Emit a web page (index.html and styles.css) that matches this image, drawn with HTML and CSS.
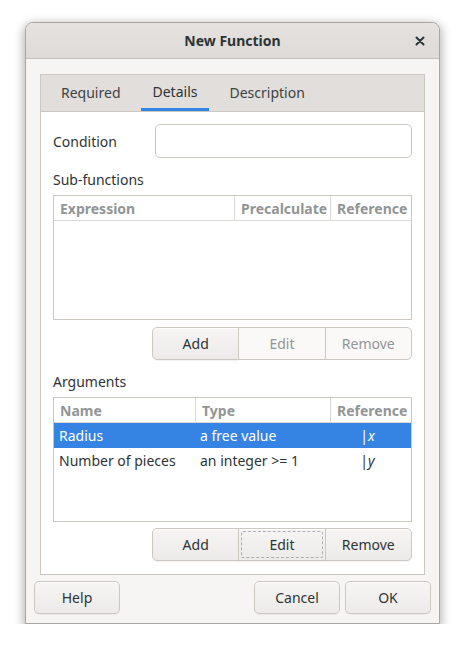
FILE: index.html
```html
<!DOCTYPE html>
<html>
<head>
<meta charset="utf-8">
<link rel="stylesheet" href="styles.css">
</head>
<body>
<div class="window">
  <div class="titlebar">
    <span class="title">New Function</span>
    <span class="close"><svg width="10" height="10" viewBox="0 0 10 10"><path d="M1.5 1.5 L8.5 8.5 M8.5 1.5 L1.5 8.5" stroke="#2e3436" stroke-width="2" stroke-linecap="round"/></svg></span>
  </div>
  <div class="content">
    <div class="notebook">
      <div class="tabs">
        <div class="tab">Required</div>
        <div class="tab active">Details</div>
        <div class="tab">Description</div>
      </div>
      <div class="page">
        <div class="row-cond">
          <span class="label">Condition</span>
          <div class="entry"></div>
        </div>
        <div class="section-label">Sub-functions</div>
        <div class="tree">
          <div class="thead cols1">
            <div class="th">Expression</div>
            <div class="th">Precalculate</div>
            <div class="th">Reference</div>
          </div>
        </div>
        <div class="btnrow">
          <div class="linked">
            <div class="btn">Add</div>
            <div class="btn disabled">Edit</div>
            <div class="btn disabled">Remove</div>
          </div>
        </div>
        <div class="section-label">Arguments</div>
        <div class="tree">
          <div class="thead cols2">
            <div class="th">Name</div>
            <div class="th">Type</div>
            <div class="th">Reference</div>
          </div>
          <div class="tr cols2 selected">
            <div class="td">Radius</div>
            <div class="td">a free value</div>
            <div class="td ref">|<i>x</i></div>
          </div>
          <div class="tr cols2">
            <div class="td">Number of pieces</div>
            <div class="td">an integer &gt;= 1</div>
            <div class="td ref">|<i>y</i></div>
          </div>
        </div>
        <div class="btnrow last">
          <div class="linked">
            <div class="btn">Add</div>
            <div class="btn focus"><span>Edit</span></div>
            <div class="btn">Remove</div>
          </div>
        </div>
      </div>
    </div>
    <div class="actions">
      <div class="btn single">Help</div>
      <div class="spacer"></div>
      <div class="btn single">Cancel</div>
      <div class="btn single">OK</div>
    </div>
  </div>
</div>
</body>
</html>
```
FILE: styles.css
```css
* { box-sizing: border-box; }
html, body { margin: 0; padding: 0; background: #ffffff; }
body {
  font-family: "Noto Sans", "DejaVu Sans", sans-serif;
  font-size: 14px;
  color: #2e3436;
}
.window {
  margin: 22px 0 0 25px;
  width: 415px;
  height: 602px;
  background: #f6f5f4;
  border: 1px solid #a8a6a3;
  border-radius: 8px 8px 0 0;
  box-shadow: 0 3px 10px 2px rgba(0,0,0,0.28);
  display: flex;
  flex-direction: column;
}
.titlebar {
  height: 36px;
  flex: none;
  background: linear-gradient(#e5e2df, #dddad7);
  border-bottom: 1px solid #c4c0bc;
  border-radius: 7px 7px 0 0;
  display: flex;
  align-items: center;
  justify-content: center;
  position: relative;
}
.title { font-weight: bold; font-size: 14px; color: #2e3436; }
.close { position: absolute; right: 14px; top: 13px; line-height: 0; }
.content {
  flex: 1;
  display: flex;
  flex-direction: column;
  padding: 15px 8px 8px 8px;
}
.notebook {
  margin: 0 6px 0 6px;
  border: 1px solid #cdc7c2;
  height: 501px;
  display: flex;
  flex-direction: column;
}
.tabs {
  height: 37px;
  background: #e1dedb;
  border-bottom: 1px solid #cdc7c2;
  display: flex;
  gap: 8px;
  padding-left: 8px;
}
.tab {
  padding: 0 12px 2px 12px;
  display: flex;
  align-items: center;
  color: #3d4244;
  height: 36px;
}
.tab.active {
  color: #2e3436;
  border-bottom: 3px solid #3584e4;
  padding-bottom: 0;
}
.page {
  flex: 1;
  background: #ffffff;
  padding: 12px 12px 0 12px;
  display: flex;
  flex-direction: column;
}
.row-cond {
  display: flex;
  align-items: center;
  height: 34px;
}
.label { width: 102px; }
.entry {
  flex: 1;
  height: 34px;
  border: 1px solid #cdc7c2;
  border-radius: 5px;
  background: #ffffff;
}
.section-label {
  height: 37px;
  display: flex;
  align-items: center;
  padding-top: 6px;
}
.tree {
  height: 125px;
  border: 1px solid #cdc7c2;
  background: #ffffff;
}
.cols1 { display: grid; grid-template-columns: 180px 96px 1fr; }
.cols2 { display: grid; grid-template-columns: 141px 135px 1fr; }
.thead {
  height: 25px;
  border-bottom: 1px solid #dcd8d5;
}
.th {
  color: #929595;
  font-weight: bold;
  font-size: 14px;
  padding-left: 6px;
  display: flex;
  align-items: center;
  border-left: 1px solid #dcd8d5;
  white-space: nowrap;
  overflow: hidden;
}
.th:first-child { border-left: none; }
.tr { height: 25px; }
.td {
  padding-left: 5px;
  display: flex;
  align-items: center;
  white-space: nowrap;
}
.td.ref { justify-content: center; padding-left: 0; padding-right: 6px; }
.td i { font-style: italic; }
.selected { background: #3584e4; color: #ffffff; }
.btnrow {
  display: flex;
  justify-content: flex-end;
  padding-top: 7px;
}
.btnrow.last { padding-top: 6px; }
.linked {
  display: flex;
  width: 260px;
}
.btn {
  height: 33px;
  display: flex;
  align-items: center;
  justify-content: center;
  border: 1px solid #cdc7c2;
  background: linear-gradient(#f6f5f4, #edebe9);
  box-shadow: inset 0 1px rgba(255,255,255,0.8), 0 1px 1px rgba(0,0,0,0.05);
  color: #2e3436;
}
.linked .btn { flex: 1; border-radius: 0; margin-left: -1px; }
.linked .btn:first-child { border-radius: 5px 0 0 5px; margin-left: 0; }
.linked .btn:last-child { border-radius: 0 5px 5px 0; }
.btn.disabled {
  background: #faf9f8;
  color: #929595;
  box-shadow: none;
}
.btn.focus { position: relative; }
.btn.focus::after {
  content: "";
  position: absolute;
  inset: 2px;
  border: 1px dashed rgba(46,52,54,0.35);
  border-radius: 2px;
}
.actions {
  display: flex;
  gap: 5px;
  padding-top: 6px;
}
.spacer { flex: 1; }
.btn.single {
  width: 86px;
  border-radius: 5px;
}
```
